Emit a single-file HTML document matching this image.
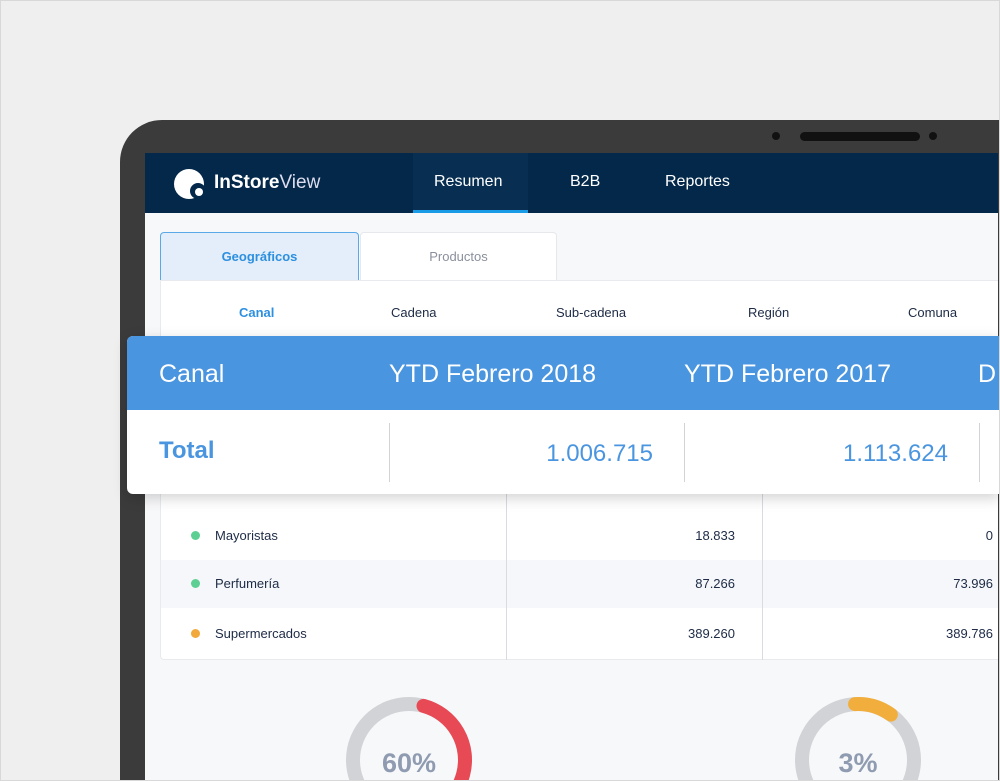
<!DOCTYPE html>
<html><head><meta charset="utf-8"><style>
*{margin:0;padding:0;box-sizing:border-box}
html,body{width:1000px;height:781px;overflow:hidden}
body{background:#efefef;font-family:"Liberation Sans",sans-serif}
#w{position:relative;width:1000px;height:781px;overflow:hidden}
.a{position:absolute}
.frame{left:120px;top:120px;width:880px;height:661px;background:#3b3b3b;border-radius:42px 0 0 0}
.screen{left:145px;top:153px;width:853px;height:627px;background:#f7f8fa;overflow:hidden}
.nav{left:0;top:0;width:853px;height:60px;background:#03284a}
.navt{color:#fff;font-size:16px;top:20px}
.sub{color:#1d2b45;top:152px;font-size:13px}
.cell{color:#1d2b45;font-size:13px}
</style></head><body><div id="w">
<div class="a frame"></div>
<div class="a" style="left:772px;top:132px;width:8px;height:8px;border-radius:50%;background:#111"></div>
<div class="a" style="left:800px;top:132px;width:120px;height:9px;border-radius:5px;background:#111"></div>
<div class="a" style="left:929px;top:132px;width:8px;height:8px;border-radius:50%;background:#111"></div>
<div class="a screen">
 <div class="a nav"></div>
 <svg class="a" style="left:28px;top:15px" width="36" height="34" viewBox="0 0 36 34"><circle cx="16" cy="16" r="15" fill="#fff"/><circle cx="25" cy="23" r="8" fill="#03284a"/><circle cx="26" cy="24" r="4" fill="#fff"/></svg>
 <div class="a" style="left:69px;top:19px;color:#fff;font-size:19px"><span style="font-weight:bold">InStore</span><span style="color:#dde">View</span></div>
 <div class="a" style="left:268px;top:0;width:115px;height:60px;background:#082f52;border-bottom:3px solid #1a9be6"></div>
 <div class="a navt" style="left:289px">Resumen</div>
 <div class="a navt" style="left:425px">B2B</div>
 <div class="a navt" style="left:520px">Reportes</div>
 <div class="a" style="left:15px;top:79px;width:199px;height:49px;background:#e3eefa;border:1px solid #5aa9e6;border-bottom:none;border-radius:4px 4px 0 0;color:#2d8fe0;font-size:13px;font-weight:bold;text-align:center;line-height:48px">Geográficos</div>
 <div class="a" style="left:215px;top:79px;width:197px;height:49px;background:#fff;border:1px solid #e6e8ec;border-bottom:none;border-radius:4px 4px 0 0;color:#8a909c;font-size:13px;text-align:center;line-height:48px">Productos</div>
 <div class="a" style="left:15px;top:127px;width:838px;height:380px;background:#fff;border:1px solid #e8eaee;border-right:none;border-radius:0 0 0 4px"></div>
 <div class="a sub" style="left:94px;color:#2d8fe0;font-weight:bold">Canal</div>
 <div class="a sub" style="left:246px">Cadena</div>
 <div class="a sub" style="left:411px">Sub-cadena</div>
 <div class="a sub" style="left:603px">Región</div>
 <div class="a sub" style="left:763px">Comuna</div>
 <div class="a" style="left:16px;top:407px;width:837px;height:48px;background:#f5f7fa"></div>
 <div class="a" style="left:361px;top:340px;width:1px;height:167px;background:#d8dbe0"></div>
 <div class="a" style="left:617px;top:340px;width:1px;height:167px;background:#d8dbe0"></div>
 <div class="a" style="left:46px;top:378px;width:9px;height:9px;border-radius:50%;background:#5ecf93"></div>
 <div class="a" style="left:46px;top:426px;width:9px;height:9px;border-radius:50%;background:#5ecf93"></div>
 <div class="a" style="left:46px;top:476px;width:9px;height:9px;border-radius:50%;background:#f2a93b"></div>
 <div class="a cell" style="left:70px;top:375px">Mayoristas</div>
 <div class="a cell" style="left:70px;top:423px">Perfumería</div>
 <div class="a cell" style="left:70px;top:473px">Supermercados</div>
 <div class="a cell" style="right:263px;top:375px">18.833</div>
 <div class="a cell" style="right:263px;top:423px">87.266</div>
 <div class="a cell" style="right:263px;top:473px">389.260</div>
 <div class="a cell" style="right:5px;top:375px">0</div>
 <div class="a cell" style="right:5px;top:423px">73.996</div>
 <div class="a cell" style="right:5px;top:473px">389.786</div>
 <svg class="a" style="left:194px;top:537px" width="140" height="90" viewBox="0 0 140 90">
  <circle cx="70" cy="70" r="56" fill="none" stroke="#d2d3d6" stroke-width="14"/>
  <circle cx="70" cy="70" r="56" fill="none" stroke="#e84a55" stroke-width="14" stroke-linecap="round" stroke-dasharray="211 400" transform="rotate(-75 70 70)"/>
  <text x="70" y="82" text-anchor="middle" font-family="Liberation Sans" font-weight="bold" font-size="27" fill="#8f9bb0">60%</text>
 </svg>
 <svg class="a" style="left:643px;top:537px" width="140" height="90" viewBox="0 0 140 90">
  <circle cx="70" cy="70" r="56" fill="none" stroke="#d2d3d6" stroke-width="14"/>
  <circle cx="70" cy="70" r="56" fill="none" stroke="#f2ae3c" stroke-width="14" stroke-linecap="round" stroke-dasharray="38 400" transform="rotate(-93 70 70)"/>
  <text x="70" y="82" text-anchor="middle" font-family="Liberation Sans" font-weight="bold" font-size="27" fill="#8f9bb0">3%</text>
 </svg>
</div>
<div class="a" style="left:127px;top:336px;width:873px;height:158px;background:#fff;border-radius:6px 0 0 6px;box-shadow:0 4px 14px rgba(0,0,0,.18);overflow:hidden">
 <div class="a" style="left:0;top:0;width:873px;height:74px;background:#4a95e0"></div>
 <div class="a" style="left:32px;top:24px;color:#fff;font-size:25px">Canal</div>
 <div class="a" style="left:262px;top:24px;color:#fff;font-size:25px">YTD Febrero 2018</div>
 <div class="a" style="left:557px;top:24px;color:#fff;font-size:25px">YTD Febrero 2017</div>
 <div class="a" style="left:851px;top:24px;color:#fff;font-size:25px">D</div>
 <div class="a" style="left:32px;top:101px;color:#4a95e0;font-size:24px;font-weight:bold">Total</div>
 <div class="a" style="left:262px;top:87px;width:1px;height:59px;background:#d0d3d8"></div>
 <div class="a" style="left:557px;top:87px;width:1px;height:59px;background:#d0d3d8"></div>
 <div class="a" style="left:852px;top:87px;width:1px;height:59px;background:#d0d3d8"></div>
 <div class="a" style="right:347px;top:104px;color:#4a95e0;font-size:24px">1.006.715</div>
 <div class="a" style="right:52px;top:104px;color:#4a95e0;font-size:24px">1.113.624</div>
</div>
<div class="a" style="left:0;top:0;width:1000px;height:781px;border:1px solid #d8d8d8"></div>
</div></body></html>
